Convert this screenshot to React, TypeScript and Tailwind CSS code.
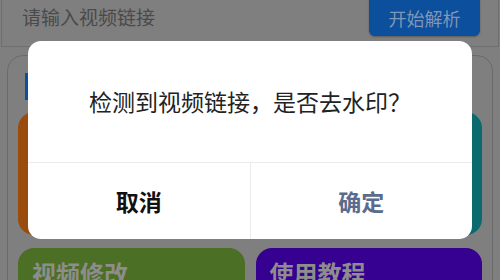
import React from "react";

export default function App() {
  return (
    <div
      className="relative w-[500px] h-[280px] overflow-hidden bg-[#7f7f7f]"
      style={{ fontFamily: '"Noto Sans CJK SC", "Noto Sans", sans-serif' }}
    >
      {/* top input row */}
      <div className="flex h-[47px] items-start border-x border-b border-[#6f6f6f] mx-[1px]">
        <div className="pl-[20px] pt-[3px] text-[19px] leading-[28px] text-[#4a4a4a]">
          请输入视频链接
        </div>
        <div className="ml-auto mr-[18px] flex h-[36px] w-[111px] items-center justify-center rounded-b-[6px] bg-[#0b4f9d] text-[18px] text-[#8196b5] shadow-[0_1px_2px_rgba(0,0,0,0.3)]">
          开始解析
        </div>
      </div>

      {/* main card */}
      <div className="mx-[7px] mt-[8px] rounded-t-[16px] border border-[#6b6b6b] px-[10px] pt-[17px] h-[260px]">
        <div className="ml-[7px] h-[27px] w-[3px] bg-[#0b4f9d]" />
        <div className="mt-[12px] grid grid-cols-2 gap-x-[11px]">
          <div className="h-[123px] rounded-[16px] bg-[#9a4c0c]" />
          <div className="h-[123px] rounded-[16px] bg-[#0b6a6e]" />
        </div>
        <div className="mt-[13px] grid grid-cols-2 gap-x-[11px]">
          <div className="h-[60px] rounded-[16px] bg-[#4b6f24] px-[14px] pt-[9px] text-[24px] font-bold leading-[32px] text-[#8d8d8d]">
            视频修改
          </div>
          <div className="h-[60px] rounded-[16px] bg-[#360090] px-[14px] pt-[9px] text-[24px] font-bold leading-[32px] text-[#8d8d8d]">
            使用教程
          </div>
        </div>
      </div>

      {/* dialog */}
      <div className="absolute left-[28px] top-[41px] flex h-[198px] w-[444px] flex-col overflow-hidden rounded-[13px] bg-white">
        <div className="flex h-[121px] items-center justify-center text-[23px] text-[#222222]">
          检测到视频链接，是否去水印？
        </div>
        <div className="flex flex-1 border-t border-[#ebebeb]">
          <div className="flex flex-1 items-center justify-center border-r border-[#ebebeb] text-[23px] font-bold text-[#111111]">
            取消
          </div>
          <div className="flex flex-1 items-center justify-center text-[23px] font-bold text-[#5a6b8c]">
            确定
          </div>
        </div>
      </div>
    </div>
  );
}
